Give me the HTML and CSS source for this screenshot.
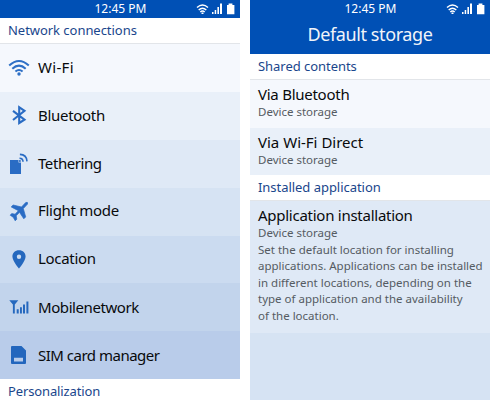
FILE: index.html
```
<!DOCTYPE html>
<html lang="en">
<head>
<meta charset="utf-8">
<title>Settings</title>
<link rel="stylesheet" href="styles.css">
</head>
<body>
<svg class="defs" width="0" height="0" aria-hidden="true">
  <symbol id="status" viewBox="0 0 40 12">
    <g fill="none" stroke="#fff" stroke-width="1.4">
      <path d="M1 4.600Q6.500-.6 12 4.600M2.700 6.900Q6.500 3.400 10.300 6.900M4.300 9Q6.500 7 8.700 9"/>
    </g>
    <path fill="#fff" d="M5.500 9.400h2v1.600h-2zM16 9h1.500v2H16zM18.700 7h1.500v4h-1.500zM21.400 4h1.600v7h-1.600zM24 .6h2V11h-2zM32.600 .6h3.800V2H38.400V11.200H31V2h1.600z"/>
  </symbol>
</svg>
<main class="screens">
  <section class="screen">
    <div class="status"><span class="time">12:45 PM</span><svg class="status-icons"><use href="#status"/></svg></div>
    <h2 class="section">Network connections</h2>
    <ul class="menu">
      <li class="item tone1"><svg class="icon" viewBox="0 0 24 24"><g fill="none" stroke="#2e70c6" stroke-width="2"><path d="M1.200 9.600Q11 .4 20.800 9.600M4.300 12.800Q11 6.500 17.700 12.800M7.400 15.600Q11 12.400 14.600 15.600"/></g><circle cx="11" cy="18" r="1.700" fill="#2e70c6"/></svg><span class="label wifi">Wi-Fi</span></li>
      <li class="item tone2"><svg class="icon" viewBox="0 0 24 24"><path d="M5 6.800 16.500 15.600 11.200 19V3.200L16.500 6.800 5 16" fill="none" stroke="#2a6cc4" stroke-width="2.100"/></svg><span class="label">Bluetooth</span></li>
      <li class="item tone3"><svg class="icon" viewBox="0 0 24 24"><path fill="#2a6cc4" d="M2 8h8.500v2.500H13V22H2z"/><g fill="none" stroke="#2a6cc4" stroke-width="1.600"><path d="M11.500 6.200Q15 6.200 15 9.700M11.900 2.400Q18.700 2.700 19 9.400"/></g><circle cx="11.900" cy="9" r="1" fill="#2a6cc4"/></svg><span class="label tight">Tethering</span></li>
      <li class="item tone4"><svg class="icon" viewBox="0 0 24 24"><path fill="#2a6cc4" stroke="#2a6cc4" stroke-width=".7" stroke-linejoin="round" d="M17.800 2.400q2.500-.7 1.700 1.700L15.300 8.600l2.400 8.300-1.900 1.900-4.300-6.500-3.300 3.500.6 3.400-1.600 1.600-2-3.600L2.200 15.200l1.500-1.600 3.400.6 3.300-3.500L3.200 6.900l1.900-1.900 8.400 2z"/></svg><span class="label high">Flight mode</span></li>
      <li class="item tone5"><svg class="icon" viewBox="0 0 24 24"><path fill="#2568be" fill-rule="evenodd" d="M11 2.300c-3.900 0-6.600 2.700-6.600 6.300 0 4.600 6.600 12 6.600 12s6.600-7.400 6.600-12c0-3.600-2.700-6.300-6.600-6.300zm0 4.200a2.200 2.200 0 1 1 0 4.400 2.200 2.200 0 0 1 0-4.400z"/></svg><span class="label high">Location</span></li>
      <li class="item tone6"><svg class="icon" viewBox="0 0 24 24"><path fill="#2568be" d="M1.300 5.200h9L6.800 9.500v9H4.900v-9zM8.700 14.200h2v4.300h-2zM12 12.200h1.900v6.300H12zM15 9.400h2v9.100h-2zM18.400 6.500h2v12h-2z"/></svg><span class="label tight">Mobilenetwork</span></li>
      <li class="item tone7"><svg class="icon" viewBox="0 0 24 24"><path fill="#2366bd" fill-rule="evenodd" d="M4 3h9.500L18 7.500V20q0 1-1 1H4q-1 0-1-1V4q0-1 1-1zm2 11.700v3.700h9v-3.700z"/></svg><span class="label tighter">SIM card manager</span></li>
    </ul>
    <h2 class="section last">Personalization</h2>
  </section>
  <section class="screen">
    <div class="status"><span class="time">12:45 PM</span><svg class="status-icons"><use href="#status"/></svg></div>
    <h1 class="title">Default storage</h1>
    <h2 class="section">Shared contents</h2>
    <div class="entry tone1"><h3>Via Bluetooth</h3><p>Device storage</p></div>
    <div class="entry tone2"><h3 class="wide">Via Wi-Fi Direct</h3><p>Device storage</p></div>
    <h2 class="section">Installed application</h2>
    <div class="entry install tone3"><h3>Application installation</h3><p>Device storage</p>
      <p class="desc">Set the default location for installing<br>applications. Applications can be installed<br>in different locations, depending on the<br>type of application and the availability<br>of the location.</p></div>
    <div class="rest tone4"></div>
  </section>
</main>
</body>
</html>
```
FILE: styles.css
```
* { box-sizing: border-box; }
body {
  margin: 0;
  background: #fff;
  font-family: "Noto Sans", "Open Sans", sans-serif;
}
h1, h2, h3, p, ul { margin: 0; padding: 0; font-weight: 400; }
ul { list-style: none; }
.defs { display: block; height: 0; }
.screens { display: flex; gap: 10px; width: 490px; height: 400px; overflow: hidden; }
.screen { display: flex; flex-direction: column; width: 240px; height: 400px; overflow: hidden; }
.screen > * { flex-shrink: 0; }
.status {
  display: grid;
  grid-template-columns: 94.5px 1fr 44px;
  height: 18px;
  background: #0050b5;
  color: #fff;
}
.time { grid-column: 2; font-size: 12px; line-height: 17px; white-space: nowrap; }
.status-icons { grid-column: 3; width: 40px; height: 12px; margin-top: 3px; }
.title {
  height: 36px;
  background: #0050b5;
  color: #f1f4f9;
  font-size: 18px;
  line-height: 33px;
  letter-spacing: -.4px;
  text-align: center;
}
.section {
  height: 26px;
  padding-left: 8px;
  border-bottom: 1px solid #e2e5e9;
  background: #fff;
  color: #1a468c;
  font-size: 13px;
  line-height: 25px;
  letter-spacing: -.04px;
  white-space: nowrap;
}
.section.last { height: auto; border: 0; letter-spacing: -.13px; }
.item { display: flex; align-items: center; height: 47.900px; padding-left: 8px; }
.icon { width: 24px; height: 24px; margin-right: 6px; }
.label {
  margin-top: -1px;
  color: #080a0c;
  font-size: 15px;
  line-height: 20px;
  letter-spacing: -.3px;
  white-space: nowrap;
}
.label.wifi { letter-spacing: .3px; }
.label.high { margin-top: -4px; }
.label.tight { letter-spacing: -.42px; }
.label.tighter { letter-spacing: -.5px; }
.entry { height: 47.700px; padding: 4px 0 0 8px; white-space: nowrap; }
.entry h3 { color: #080a0c; font-size: 15px; line-height: 20px; letter-spacing: -.26px; }
.entry h3.wide { letter-spacing: 0; }
.entry p { color: #555b62; font-size: 11.500px; line-height: 16.500px; }
.entry.install { height: 131.500px; }
.rest { flex: 1; }
.tone1 { background: #f5f8fd; }
.tone2 { background: #e9f0f9; }
.tone3 { background: #dfe9f6; }
.tone4 { background: #d6e3f3; }
.tone5 { background: #cbdbf0; }
.tone6 { background: #c2d4ec; }
.tone7 { background: #b9ccea; }
```
